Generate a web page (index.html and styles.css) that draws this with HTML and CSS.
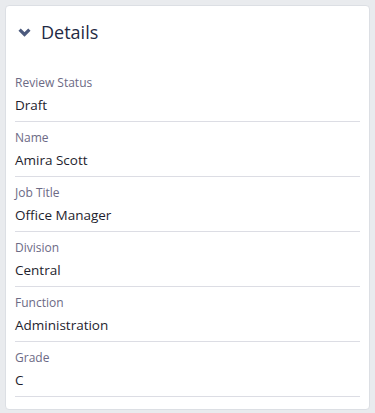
FILE: index.html
```html
<!DOCTYPE html>
<html lang="en">

<head>
    <meta charset="UTF-8" />
    <meta name="viewport" content="width=device-width, initial-scale=1" />
    <title>Details</title>
    <link rel="stylesheet" href="styles.css">
</head>

<body>
    <div class="card">
        <div class="card-header">
            <svg class="chevron" width="13" height="9" viewBox="0 0 13 9">
                <path d="M1.6 1.6 L6.5 6.5 L11.4 1.6" stroke="#4c5a7d" stroke-width="3.2" fill="none" />
            </svg>
            <span class="title">Details</span>
        </div>

        <div class="field">
            <div class="label">Review Status</div>
            <div class="value">Draft</div>
        </div>
        <div class="field">
            <div class="label">Name</div>
            <div class="value">Amira Scott</div>
        </div>
        <div class="field">
            <div class="label">Job Title</div>
            <div class="value">Office Manager</div>
        </div>
        <div class="field">
            <div class="label">Division</div>
            <div class="value">Central</div>
        </div>
        <div class="field">
            <div class="label">Function</div>
            <div class="value">Administration</div>
        </div>
        <div class="field">
            <div class="label">Grade</div>
            <div class="value">C</div>
        </div>
    </div>
</body>

</html>
```

FILE: styles.css
```css
body {
    font-family: "Open Sans", Arial, sans-serif;
    background-color: #e9ebee;
    margin: 0;
    padding: 5px 5px 3px 5px;
}

.card {
    background: white;
    border: 1px solid #dcdfe4;
    border-radius: 4px;
    padding: 0 9px 12px 9px;
}

.card-header {
    display: flex;
    align-items: center;
    gap: 10px;
    padding: 15px 0 24px 3px;
    height: 22px;
}

.chevron {
    display: block;
}

.title {
    font-size: 18px;
    line-height: 22px;
    color: #1f2a44;
}

.field {
    padding: 7px 0 6px 0;
    border-bottom: 1px solid #dcdde4;
    display: flex;
    flex-direction: column;
    gap: 3px;
}

.label {
    font-size: 12px;
    line-height: 18px;
    color: #6c6a85;
}

.value {
    font-size: 13.5px;
    line-height: 20px;
    color: #1e1e2e;
}
```
